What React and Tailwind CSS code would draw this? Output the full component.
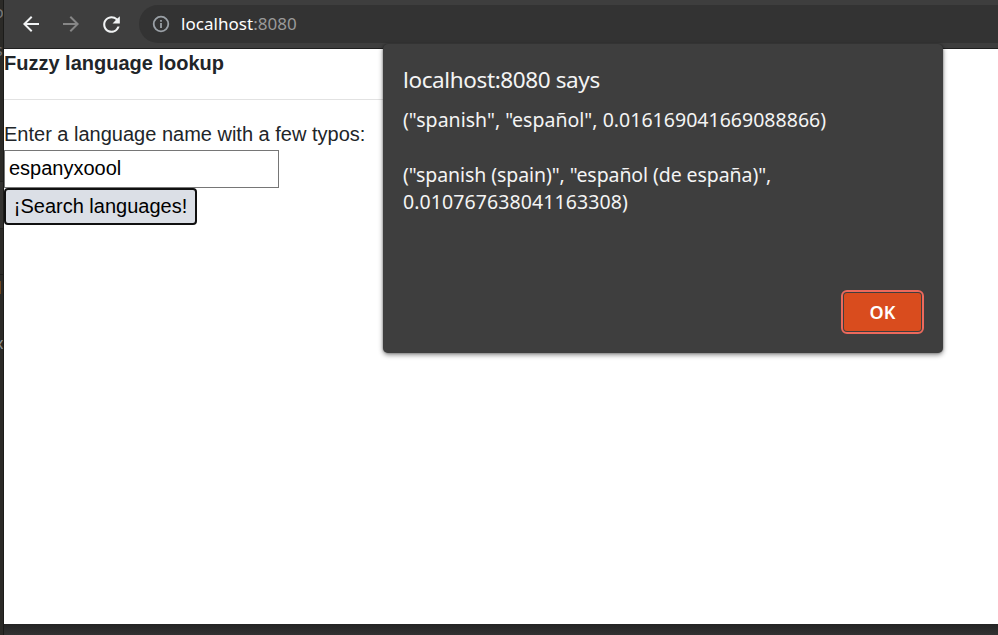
import React from "react";
import { MdArrowBack, MdArrowForward, MdRefresh } from "react-icons/md";

function EditorEdge() {
  return (
    <div className="w-1 shrink-0 overflow-hidden border-r border-[#1b1b19] bg-[#2b2a27] font-['Noto_Sans',sans-serif] text-[16px] leading-[20px]">
      <div className="-ml-[6px] mt-[2px] text-[#77777a]">o</div>
      <div className="-ml-[5px] mt-[18px] text-[#77777a]">s</div>
      <div className="mt-[121px] h-[48px] border-y border-[#222220] bg-[#333230]" />
      <div className="h-[46px] border-b border-[#1e1e1c]" />
      <div className="mt-[6px] h-[13px] w-px bg-[#71461f]" />
      <div className="-ml-[5px] mt-[39px] text-[#8f9396]">x</div>
    </div>
  );
}

function InfoIcon() {
  return (
    <svg width="18" height="18" viewBox="0 0 18 18" fill="none" stroke="#9aa0a6" strokeWidth="1.8">
      <circle cx="9" cy="9" r="7.3" />
      <path d="M9 8v5M9 5v1.8" />
    </svg>
  );
}

function Toolbar() {
  return (
    <header className="flex h-[49px] shrink-0 items-start border-b border-[#202020] bg-[#3e3e3e] pt-[5px]">
      <div className="flex h-[38px] items-center gap-4 pl-[15px]">
        <MdArrowBack size={24} color="#f1f3f4" />
        <MdArrowForward size={24} color="#868686" />
        <MdRefresh size={25} className="-mr-px" color="#f1f3f4" />
      </div>
      <div className="ml-4 flex h-[38px] flex-1 items-center rounded-l-full bg-[#333333] pl-[13px]">
        <InfoIcon />
        <span className="ml-[11px] whitespace-nowrap font-['Noto_Sans',sans-serif] text-[17px] tracking-[0.04px] text-white">
          localhost<span className="text-[#9a9a9a]">:8080</span>
        </span>
      </div>
    </header>
  );
}

function Dialog() {
  return (
    <section
      role="alertdialog"
      className="absolute left-[383px] top-[44px] flex h-[309px] w-[560px] flex-col rounded-[5px] bg-[#3e3e3e] pl-5 font-['Noto_Sans',sans-serif] text-[#f4f4f4] shadow-[0_2px_5px_rgba(0,0,0,0.45),0_0_2px_rgba(0,0,0,0.4)]"
    >
      <h2 className="mt-[21px] whitespace-nowrap text-[22.5px] leading-[30px]">
        <span className="inline-block tracking-[-0.38px]">localhost:8080 says</span>
      </h2>
      <div className="mt-[11px] whitespace-nowrap text-[19.5px] leading-[27.4px]">
        <p className="tracking-[0.02px]">("spanish", "español", 0.016169041669088866)</p>
        <p>&nbsp;</p>
        <p className="tracking-[-0.08px]">("spanish (spain)", "español (de españa)",</p>
        <p className="tracking-[0.09px]">0.010767638041163308)</p>
      </div>
      <button className="mb-[19px] mr-[19px] mt-auto h-[44px] w-[83px] self-end rounded-[6px] border-2 border-[#ec695c] p-px text-[18px] font-semibold text-white">
        <span className="flex h-full items-center justify-center rounded-[3px] bg-[#d94c1e]">OK</span>
      </button>
    </section>
  );
}

export default function App() {
  return (
    <div className="relative flex h-[635px] w-[998px] overflow-hidden bg-[#2b2b2a]">
      <EditorEdge />
      <div className="flex min-w-0 flex-1 flex-col">
        <Toolbar />
        <main className="flex h-[575px] flex-col items-start bg-white font-['Liberation_Sans',Arial,sans-serif] text-[20px] text-[#212529]">
          <h1 className="h-[50px] whitespace-nowrap font-bold leading-[28px]">Fuzzy language lookup</h1>
          <hr className="w-[800px] border-[#e2e2e2]" />
          <label className="mt-[19px] whitespace-nowrap leading-[30px]">Enter a language name with a few typos:</label>
          <input
            defaultValue="espanyxoool"
            className="mt-px h-[38px] w-[275px] border border-[#767676] bg-white px-1 pb-px text-[20px] text-black outline-none"
          />
          <button className="h-[37px] w-[193px] whitespace-nowrap rounded-[4px] border-2 border-[#101010] bg-[#dbdfe6] pb-0.5 text-black">
            ¡Search languages!
          </button>
        </main>
        <div className="flex-1 bg-linear-to-b from-[#242424] to-[#323232]" />
      </div>
      <Dialog />
    </div>
  );
}
